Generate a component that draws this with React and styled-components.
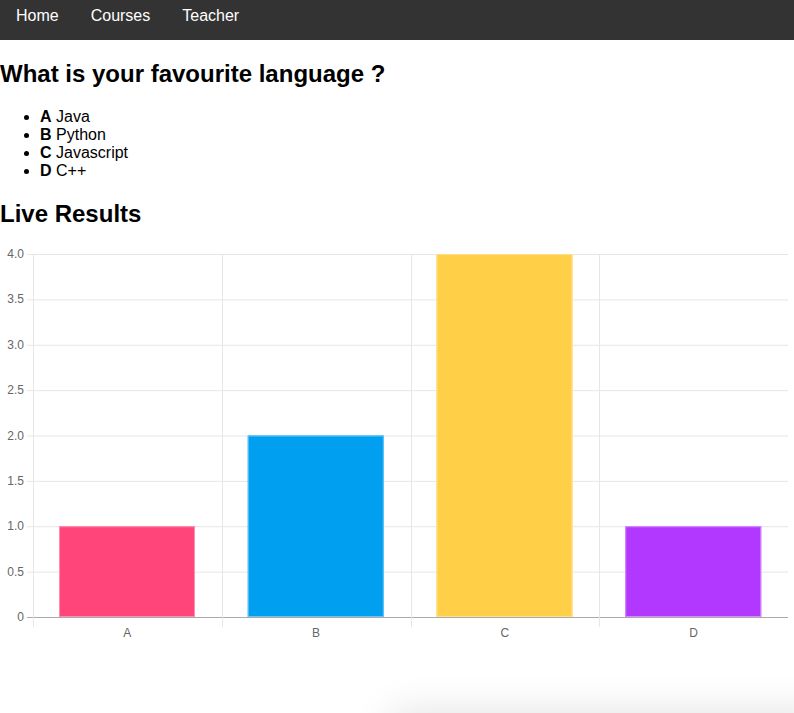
import React from "react";
import styled, { createGlobalStyle } from "styled-components";

const GlobalStyle = createGlobalStyle`
  body {
    margin: 0;
    font-family: "Liberation Sans", Arial, Helvetica, sans-serif;
    background: #fff;
    color: #000;
  }
`;

const NavBar = styled.ul`
  list-style: none;
  margin: 0;
  padding: 0;
  height: 40px;
  background-color: #333;
  display: flex;
  align-items: flex-start;
`;

const NavItem = styled.li`
  a {
    display: block;
    color: #fff;
    text-decoration: none;
    font-size: 16px;
    line-height: 18px;
    padding: 7px 16px;
  }
`;

const Heading = styled.h2`
  font-size: 24px;
  font-weight: bold;
  margin: 0.83em 0;
`;

const Options = styled.ul`
  margin: 16px 0;
  padding-left: 40px;
  font-size: 16px;
  li {
    line-height: 18px;
  }
`;

const ChartWrap = styled.div`
  width: 794px;
  height: 410px;
`;

const BottomShadow = styled.div`
  position: fixed;
  left: 390px;
  top: 713px;
  width: 440px;
  height: 120px;
  border-radius: 6px;
  box-shadow: 0 0 40px rgba(0, 0, 0, 0.12);
  background: #fff;
`;

const options = [
  { key: "A", label: "Java" },
  { key: "B", label: "Python" },
  { key: "C", label: "Javascript" },
  { key: "D", label: "C++" },
];

const data = [
  { label: "A", value: 1, color: "#ff457a", border: "#ff8fb0" },
  { label: "B", value: 2, color: "#019fef", border: "#66c6f5" },
  { label: "C", value: 4, color: "#ffcf47", border: "#ffe08a" },
  { label: "D", value: 1, color: "#b338ff", border: "#d38cff" },
];

function BarChart() {
  const left = 33;
  const right = 788;
  const top = 6;
  const bottom = 369;
  const max = 4;
  const step = (right - left) / data.length;
  const yOf = (v) => bottom - ((bottom - top) * v) / max;
  const ticks = [0, 0.5, 1, 1.5, 2, 2.5, 3, 3.5, 4];

  return (
    <svg width="794" height="410" viewBox="0 0 794 410">
      {ticks.map((t) => (
        <g key={t}>
          <line
            x1={27}
            x2={right}
            y1={yOf(t) + 0.5}
            y2={yOf(t) + 0.5}
            stroke={t === 0 ? "#aaa" : "#e6e6e6"}
            strokeWidth="1"
          />
          <text
            x={24}
            y={yOf(t) + 4}
            textAnchor="end"
            fontSize="12"
            fill="#666"
            fontFamily="Liberation Sans, Arial, sans-serif"
          >
            {t === 0 ? "0" : t.toFixed(1)}
          </text>
        </g>
      ))}
      {[0, 1, 2, 3].map((i) => (
        <line
          key={i}
          x1={Math.round(left + step * i) + 0.5}
          x2={Math.round(left + step * i) + 0.5}
          y1={top}
          y2={bottom + 10}
          stroke="#e6e6e6"
          strokeWidth="1"
        />
      ))}
      {data.map((d, i) => {
        const x = left + step * i + 26;
        const w = 136;
        const y = yOf(d.value);
        return (
          <g key={d.label}>
            <rect x={x} y={y} width={w} height={bottom - y} fill={d.color} />
            <rect
              x={x + 0.5}
              y={y + 0.5}
              width={w - 1}
              height={bottom - y - 1}
              fill="none"
              stroke={d.border}
              strokeWidth="1"
            />
            <text
              x={left + step * i + step / 2}
              y={bottom + 20}
              textAnchor="middle"
              fontSize="12"
              fill="#666"
              fontFamily="Liberation Sans, Arial, sans-serif"
            >
              {d.label}
            </text>
          </g>
        );
      })}
    </svg>
  );
}

export default function App() {
  return (
    <>
      <GlobalStyle />
      <NavBar>
        <NavItem><a href="#">Home</a></NavItem>
        <NavItem><a href="#">Courses</a></NavItem>
        <NavItem><a href="#">Teacher</a></NavItem>
      </NavBar>
      <Heading>What is your favourite language ?</Heading>
      <Options>
        {options.map((o) => (
          <li key={o.key}>
            <b>{o.key}</b> {o.label}
          </li>
        ))}
      </Options>
      <Heading>Live Results</Heading>
      <ChartWrap>
        <BarChart />
      </ChartWrap>
      <BottomShadow />
    </>
  );
}
